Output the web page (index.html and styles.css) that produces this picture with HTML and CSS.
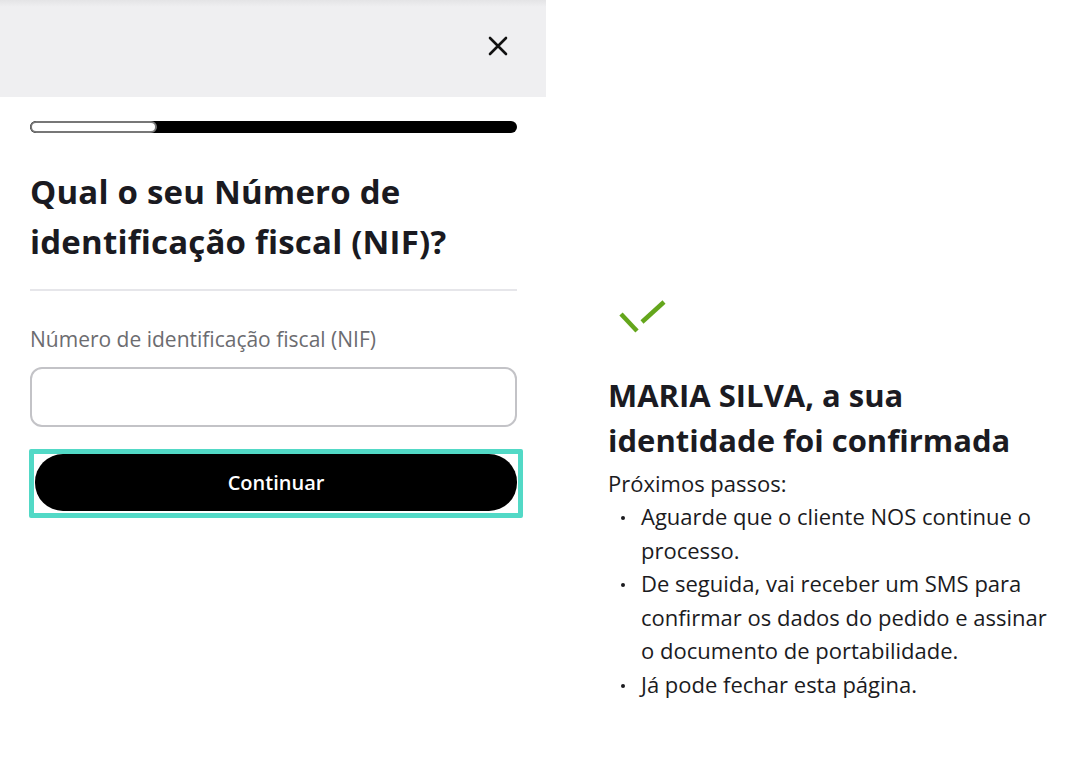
FILE: index.html
```html
<!DOCTYPE html>
<html lang="pt">
<head>
    <meta charset="UTF-8">
    <meta name="viewport" content="width=device-width, initial-scale=1.0">
    <title>NIF</title>
    <link rel="stylesheet" href="styles.css">
</head>
<body>

    <div class="page">
        <!-- Left: NIF form -->
        <div class="form-panel">
            <div class="top-bar">
                <button class="close-button" aria-label="Fechar">
                    <svg width="22" height="22" viewBox="0 0 22 22">
                        <path d="M3 3 L19 19 M19 3 L3 19" stroke="#111" stroke-width="2.6" stroke-linecap="round"/>
                    </svg>
                </button>
            </div>

            <div class="form-body">
                <div class="progress-track">
                    <div class="progress-done" style="width: 26%;"></div>
                </div>

                <h1 class="form-title">Qual o seu Número de identificação fiscal (NIF)?</h1>
                <div class="divider"></div>

                <label class="field-label" for="nifInput">Número de identificação fiscal (NIF)</label>
                <input type="text" id="nifInput" class="field-input">

                <div class="focus-ring">
                    <button class="continue-button">Continuar</button>
                </div>
            </div>
        </div>

        <!-- Right: confirmation -->
        <div class="confirm-panel">
            <svg class="check-icon" width="50" height="36" viewBox="0 0 50 36">
                <path d="M3 16 L19 33" stroke="#64a61c" stroke-width="4.5"/>
                <path d="M24 24 L46 4" stroke="#64a61c" stroke-width="4.5"/>
            </svg>
            <h2 class="confirm-title">MARIA SILVA, a sua identidade foi confirmada</h2>
            <p class="steps-intro">Próximos passos:</p>
            <ul class="steps">
                <li>Aguarde que o cliente NOS continue o processo.</li>
                <li>De seguida, vai receber um SMS para confirmar os dados do pedido e assinar o documento de portabilidade.</li>
                <li>Já pode fechar esta página.</li>
            </ul>
        </div>
    </div>

</body>
</html>
```

FILE: styles.css
```css
/* Basic Reset */
* {
    margin: 0;
    padding: 0;
    box-sizing: border-box;
}

body {
    font-family: 'Open Sans', sans-serif;
    background-color: #fff;
    color: #1b1b22;
}

.page {
    display: flex;
    width: 1088px;
    height: 765px;
}

/* Left panel */
.form-panel {
    width: 546px;
    flex-shrink: 0;
}

.top-bar {
    height: 97px;
    background: linear-gradient(#e4e4e6, #efeff1 7px);
    display: flex;
    justify-content: flex-end;
    align-items: center;
    padding-right: 36px;
    padding-bottom: 6px;
}

.close-button {
    background: none;
    border: none;
    width: 24px;
    height: 24px;
    display: flex;
    align-items: center;
    justify-content: center;
    cursor: pointer;
}

.form-body {
    padding: 24px 29px 0 30px;
}

.progress-track {
    height: 12px;
    background-color: #000;
    border-radius: 6px;
    overflow: hidden;
}

.progress-done {
    height: 100%;
    background-color: #fff;
    border: 2px solid #777;
    border-radius: 6px;
}

.form-title {
    font-size: 33px;
    font-weight: 700;
    line-height: 50px;
    margin-top: 34px;
    color: #1a1a21;
    letter-spacing: 0.2px;
}

.divider {
    height: 2px;
    background-color: #e6e6ea;
    margin-top: 22px;
}

.field-label {
    display: block;
    margin-top: 33px;
    font-size: 21px;
    line-height: 30px;
    color: #6c6c70;
}

.field-input {
    display: block;
    width: 100%;
    height: 60px;
    margin-top: 13px;
    border: 2px solid #c3c3c7;
    border-radius: 12px;
    font-size: 18px;
    padding: 0 16px;
    outline: none;
}

.focus-ring {
    margin-top: 22px;
    margin-left: -1px;
    margin-right: -6px;
    border: 5px solid #52d9c6;
    border-radius: 2px;
    padding: 0 0 2px 1px;
}

.continue-button {
    display: block;
    width: 482px;
    height: 57px;
    background-color: #000;
    color: #fff;
    border: none;
    border-radius: 28px;
    font-family: 'Open Sans', sans-serif;
    font-size: 20px;
    font-weight: 600;
    cursor: pointer;
}

/* Right panel */
.confirm-panel {
    flex: 1;
    padding: 298px 30px 0 62px;
}

.check-icon {
    display: block;
    margin-left: 10px;
}

.confirm-title {
    max-width: 440px;
    font-size: 31px;
    font-weight: 700;
    line-height: 45px;
    margin-top: 39px;
    color: #1b1b22;
}

.steps-intro {
    font-size: 22px;
    line-height: 33px;
    margin-top: 4px;
    color: #1b1b1e;
}

.steps {
    list-style: none;
    font-size: 22px;
    line-height: 33.6px;
    color: #1b1b1e;
}

.steps li {
    position: relative;
    padding-left: 33px;
}

.steps li::before {
    content: "";
    position: absolute;
    left: 13px;
    top: 16px;
    width: 4px;
    height: 4px;
    border-radius: 50%;
    background-color: #1b1b1e;
}
```
